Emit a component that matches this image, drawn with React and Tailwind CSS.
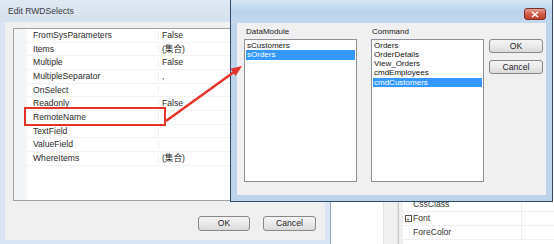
import React from "react";

const font = { fontFamily: '"Liberation Sans", "Noto Sans CJK SC", Arial, sans-serif' };

const props = [
  ["FromSysParameters", "False"],
  ["Items", "(集合)"],
  ["Multiple", "False"],
  ["MultipleSeparator", ","],
  ["OnSelect", ""],
  ["Readonly", "False"],
  ["RemoteName", ""],
  ["TextField", ""],
  ["ValueField", ""],
  ["WhereItems", "(集合)"],
];

const backProps = [
  ["CssClass", false],
  ["Font", true],
  ["ForeColor", false],
];

const Win7Button = ({ children, className }) => (
  <button
    className={
      "flex items-center justify-center rounded-[3px] border border-[#8a8a8a] bg-gradient-to-b from-[#f4f4f4] via-[#ebebeb] to-[#d9d9d9] text-[8.6px] text-[#222] " +
      className
    }
  >
    {children}
  </button>
);

const ListBox = ({ items, selected }) => (
  <div className="flex h-[143px] w-[113px] flex-col border border-[#8e9198] bg-white p-px">
    {items.map((it) => (
      <div
        key={it}
        className={
          it === selected
            ? "flex h-[9.25px] items-center bg-[#3399ff] pl-[1px] text-[8px] leading-none text-white"
            : "flex h-[9.25px] items-center pl-[1px] text-[8px] leading-none text-[#111]"
        }
      >
        {it}
      </div>
    ))}
  </div>
);

export default function App() {
  return (
    <div className="relative h-[244px] w-[554px] overflow-hidden bg-white" style={font}>
      {/* property window behind everything */}
      <div className="absolute left-[330px] top-0 flex h-[244px] w-[224px]">
        <div className="w-[53px] bg-white" />
        <div className="w-[15px] border-x border-[#e2e2e2] bg-[#f0f0f0]" />
        <div className="flex flex-1 border-l border-[#c8c8c8] bg-white">
          <div className="w-[4px] bg-[#f0f0f0]" />
          <div className="flex flex-1 flex-col pt-[198px]">
            {backProps.map(([name, plus]) => (
              <div key={name} className="flex h-[14px] items-center border-b border-[#f0f0f0]">
                <div className="flex w-[10px] justify-center">
                  {plus && (
                    <div className="flex h-[7px] w-[7px] items-center justify-center border border-[#555] text-[6px] leading-none text-[#333]">
                      +
                    </div>
                  )}
                </div>
                <div className="w-[109px] border-r border-[#f0f0f0] text-[8.6px] text-[#333]">{name}</div>
              </div>
            ))}
          </div>
        </div>
      </div>

      {/* Edit RWDSelects dialog */}
      <div className="absolute left-0 top-0 flex h-[244px] w-[331px] flex-col border-r border-[#8fa6bf] bg-[#d9e5f2]">
        <div className="flex h-[22px] items-center bg-gradient-to-b from-[#e0e8f1] to-[#d5e1ee] pl-[8px] text-[8.6px] text-[#3a3a3a]">
          Edit RWDSelects
        </div>
        <div className="mx-[5px] mb-[4px] flex flex-1 flex-col bg-[#f0f0f0] px-[8px] pt-[6px]">
          <div className="flex h-[173px] border border-[#a0a0a0] bg-white">
            <div className="w-[13px] bg-[#f3f6f9]" />
            <div className="flex flex-1 flex-col">
              {props.map(([name, val]) => (
                <div key={name} className="flex h-[13.67px] items-center border-b border-[#f3f3f3]">
                  <div className="w-[132px] border-r border-[#f0f0f0] pl-[6px] text-[8.6px] leading-none text-[#2a2a2a]">
                    {name}
                  </div>
                  <div className="pl-[3px] text-[8.6px] leading-none text-[#2a2a2a]">{val}</div>
                </div>
              ))}
            </div>
          </div>
          <div className="mt-[15px] flex justify-end gap-[13px] pr-[1px]">
            <Win7Button className="h-[15px] w-[52px]">OK</Win7Button>
            <Win7Button className="h-[15px] w-[53px]">Cancel</Win7Button>
          </div>
        </div>
      </div>

      {/* selection dialog */}
      <div className="absolute left-[230px] top-0 flex h-[202px] w-[323px] flex-col border border-t-0 border-[#2f4a66] bg-[#bcd3ea]">
        <div className="relative h-[23px] bg-gradient-to-b from-[#d7e6f5] via-[#bad2ea] to-[#c4d8ed]">
          <div className="absolute left-[293px] top-[8px] flex h-[12px] w-[22px] items-center justify-center rounded-[3px] border border-[#7a3028] bg-gradient-to-b from-[#e8a193] via-[#cf5a45] to-[#c4412d]">
            <svg width="8" height="7" viewBox="0 0 8 7">
              <path d="M1 1 L7 6 M7 1 L1 6" stroke="#fff" strokeWidth="1.6" />
            </svg>
          </div>
        </div>
        <div className="mx-[6px] mb-[6px] flex flex-1 gap-[14px] bg-[#f0f0f0] pl-[7px] pt-[3px]">
          <div className="flex flex-col">
            <div className="h-[13px] pl-[2px] text-[8px] font-normal leading-[12px] text-[#222]">DataModule</div>
            <ListBox items={["sCustomers", "sOrders"]} selected="sOrders" />
          </div>
          <div className="flex flex-col">
            <div className="h-[13px] pl-[1px] text-[8px] font-normal leading-[12px] text-[#222]">Command</div>
            <ListBox
              items={["Orders", "OrderDetails", "View_Orders", "cmdEmployees", "cmdCustomers"]}
              selected="cmdCustomers"
            />
          </div>
          <div className="-ml-[9px] flex flex-col gap-[7px] pt-[13px]">
            <Win7Button className="h-[14px] w-[54px]">OK</Win7Button>
            <Win7Button className="h-[14px] w-[54px]">Cancel</Win7Button>
          </div>
        </div>
      </div>

      {/* annotation */}
      <div className="absolute left-[24px] top-[107px] h-[19px] w-[142px] border-2 border-[#e5322b]" />
      <svg className="pointer-events-none absolute left-0 top-0" width="554" height="244">
        <line x1="166" y1="121" x2="234" y2="72" stroke="#e5322b" strokeWidth="2.5" />
        <polygon points="242,66 235.7,76.1 230.5,68.8" fill="#e5322b" />
      </svg>
    </div>
  );
}
